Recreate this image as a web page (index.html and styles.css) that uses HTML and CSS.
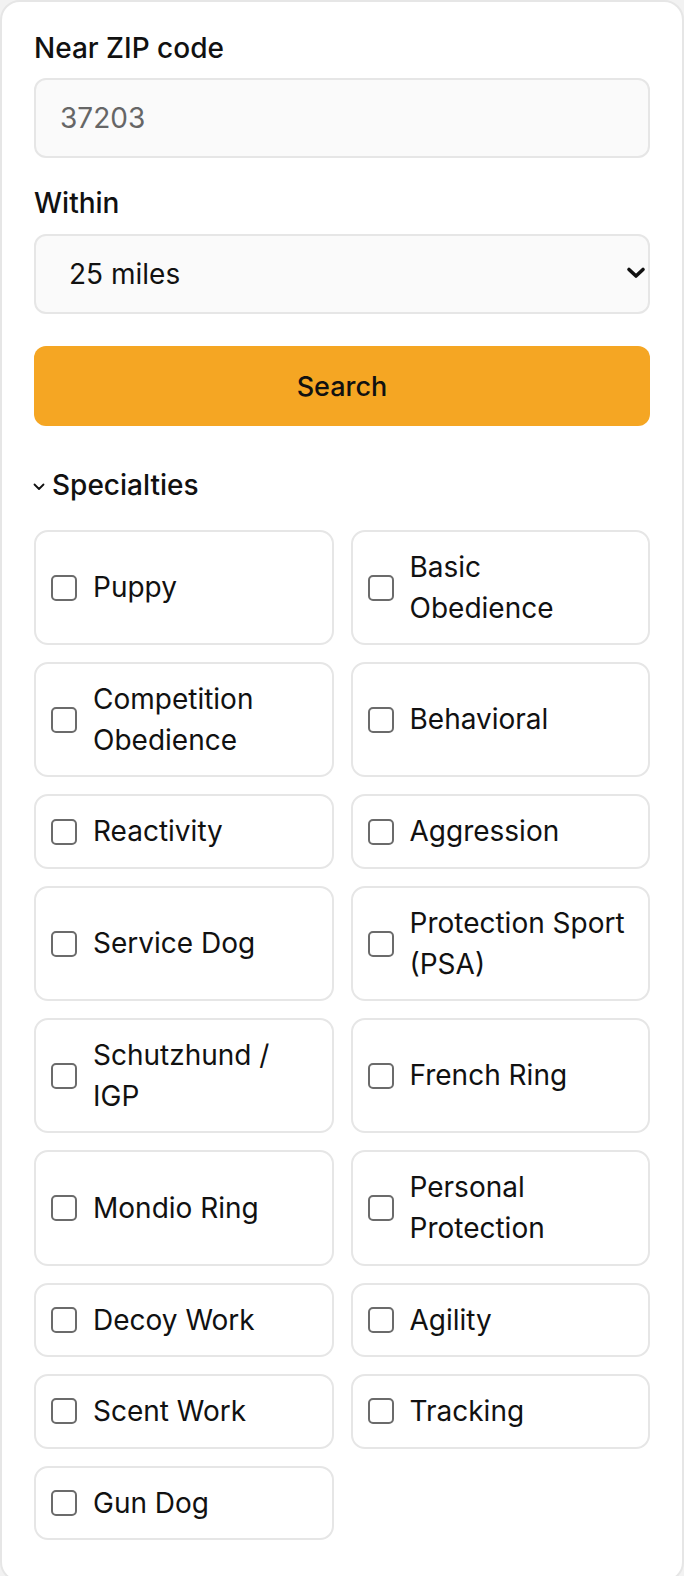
FILE: index.html
```html
<!DOCTYPE html>
<html lang="en">
<head>
<meta charset="utf-8">
<title>Find a trainer</title>
<link rel="stylesheet" href="styles.css">
</head>
<body>
<form class="panel">
  <label class="field-label" for="zip">Near ZIP code</label>
  <input class="text-input" id="zip" type="text" placeholder="37203">

  <label class="field-label field-label--spaced" for="within">Within</label>
  <div class="select-wrap">
    <select class="select-input" id="within">
      <option>25 miles</option>
      <option>50 miles</option>
      <option>100 miles</option>
    </select>
    <svg class="select-arrow" width="20" height="14" viewBox="0 0 20 14"><polyline points="3,3.5 10,10 17,3.5" fill="none" stroke="#111" stroke-width="3.6" stroke-linecap="round" stroke-linejoin="round"/></svg>
  </div>

  <button class="search-btn" type="button">Search</button>

  <div class="section-head">
    <svg class="section-chevron" width="12" height="8" viewBox="0 0 12 8"><polyline points="1.5,1.5 6,6 10.5,1.5" fill="none" stroke="#111" stroke-width="1.8" stroke-linecap="round" stroke-linejoin="round"/></svg>
    <span>Specialties</span>
  </div>

  <div class="spec-grid">
    <label class="spec"><span class="box"></span><span class="spec-text">Puppy</span></label>
    <label class="spec"><span class="box"></span><span class="spec-text">Basic Obedience</span></label>
    <label class="spec"><span class="box"></span><span class="spec-text">Competition Obedience</span></label>
    <label class="spec"><span class="box"></span><span class="spec-text">Behavioral</span></label>
    <label class="spec"><span class="box"></span><span class="spec-text">Reactivity</span></label>
    <label class="spec"><span class="box"></span><span class="spec-text">Aggression</span></label>
    <label class="spec"><span class="box"></span><span class="spec-text">Service Dog</span></label>
    <label class="spec"><span class="box"></span><span class="spec-text">Protection Sport (PSA)</span></label>
    <label class="spec"><span class="box"></span><span class="spec-text">Schutzhund / IGP</span></label>
    <label class="spec"><span class="box"></span><span class="spec-text">French Ring</span></label>
    <label class="spec"><span class="box"></span><span class="spec-text">Mondio Ring</span></label>
    <label class="spec"><span class="box"></span><span class="spec-text">Personal Protection</span></label>
    <label class="spec"><span class="box"></span><span class="spec-text">Decoy Work</span></label>
    <label class="spec"><span class="box"></span><span class="spec-text">Agility</span></label>
    <label class="spec"><span class="box"></span><span class="spec-text">Scent Work</span></label>
    <label class="spec"><span class="box"></span><span class="spec-text">Tracking</span></label>
    <label class="spec"><span class="box"></span><span class="spec-text">Gun Dog</span></label>
  </div>
</form>
</body>
</html>
```
FILE: styles.css
```css
* { box-sizing: border-box; }
html, body {
  margin: 0;
  padding: 0;
  background: #f2f2f2;
}
body {
  font-family: Inter, "Noto Sans", sans-serif;
  color: #111;
}
.panel {
  display: flex;
  flex-direction: column;
  width: 684px;
  min-height: 1576px;
  background: #fff;
  border: 2px solid #e6e6e6;
  border-radius: 20px;
  padding: 26px 32px 40px;
}
.field-label {
  display: block;
  font-size: 28px;
  line-height: 40px;
  font-weight: 500;
  margin-bottom: 10px;
}
.field-label--spaced {
  margin-top: 25px;
  margin-bottom: 11px;
}
.text-input,
.select-input {
  display: block;
  width: 100%;
  height: 80px;
  border: 2px solid #e6e6e6;
  border-radius: 12px;
  background: #fafafa;
  font-family: Inter, "Noto Sans", sans-serif;
  font-size: 28px;
  color: #111;
  padding: 0 24px;
  margin: 0;
  outline: none;
}
.text-input::placeholder { color: #666; }
.select-wrap {
  position: relative;
}
.select-input {
  -webkit-appearance: none;
  appearance: none;
  padding: 0 60px 0 33px;
}
.select-arrow {
  position: absolute;
  right: 4px;
  top: 50%;
  margin-top: -8px;
  pointer-events: none;
}
.search-btn {
  display: block;
  width: 100%;
  height: 80px;
  margin-top: 32px;
  border: 0;
  border-radius: 12px;
  background: #f5a623;
  font-family: Inter, "Noto Sans", sans-serif;
  font-size: 27px;
  font-weight: 500;
  color: #111;
}
.section-head {
  display: flex;
  align-items: center;
  gap: 7px;
  margin-top: 39px;
  font-size: 28px;
  line-height: 40px;
  font-weight: 500;
}
.section-chevron { flex: none; margin-left: -1px; margin-top: 3px; }
.spec-grid {
  display: grid;
  grid-template-columns: 1fr 1fr;
  gap: 17px 17px;
  margin-top: 25px;
}
.spec {
  display: flex;
  align-items: center;
  gap: 16px;
  border: 2px solid #e6e6e6;
  border-radius: 14px;
  padding: 15px 20px 15px 15px;
  font-size: 28px;
  line-height: 1.45;
  font-weight: 400;
}
.box {
  flex: none;
  width: 26px;
  height: 26px;
  border: 2px solid #6b6b6b;
  border-radius: 5px;
  background: #fff;
}
.spec-text { min-width: 0; }
```
